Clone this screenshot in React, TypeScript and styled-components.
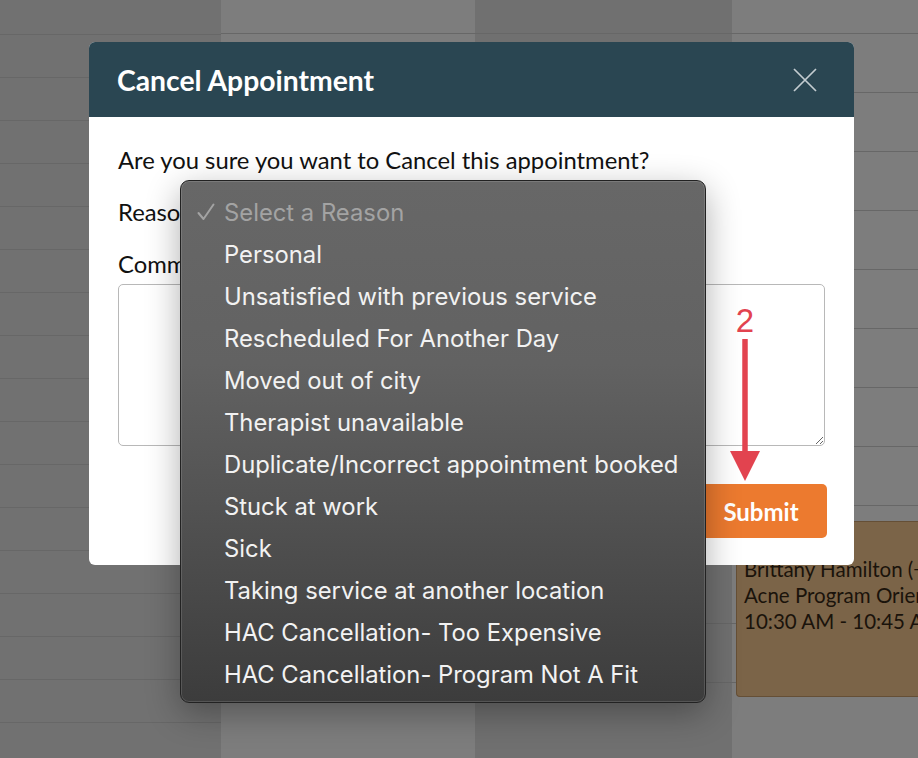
import styled, { createGlobalStyle } from 'styled-components'

// ─── global ───
const GlobalStyle = createGlobalStyle`
  html, body { margin: 0; padding: 0; height: 100%; overflow: hidden; }
  body { font-family: Lato, "Liberation Sans", sans-serif; }
  #root { height: 100%; }
`

const Page = styled.div`
  position: relative;
  width: 100%;
  height: 100vh;
  overflow: hidden;
`

// ─── calendar behind the overlay ───
const Calendar = styled.div`
  display: grid;
  grid-template-columns: 221px 254px 257px 1fr;
  height: 100%;
`

const DayColumn = styled.div<{ $shade: string; $step: number; $offset: number }>`
  display: flex;
  flex-direction: column;
  min-width: 0;
  background-color: ${p => p.$shade};
  background-image: repeating-linear-gradient(
    to bottom,
    transparent 0,
    transparent ${p => p.$step - 1}px,
    #676767 ${p => p.$step - 1}px,
    #676767 ${p => p.$step}px
  );
  background-position: 0 ${p => p.$offset}px;
`

const EventSlot = styled.div`
  padding: 521px 0 0 4px;
`

const EventCard = styled.div`
  height: 176px;
  box-sizing: border-box;
  padding: 34px 0 0 7px;
  background: #7b6448;
  border: 1px solid #654f36;
  border-right: none;
  border-radius: 4px 0 0 4px;
  font-size: 20.5px;
  line-height: 26px;
  color: #1a130b;
  white-space: nowrap;
  overflow: hidden;
`

// ─── modal ───
const Modal = styled.div`
  position: absolute;
  left: 89px;
  top: 42px;
  width: 765px;
  background: #fff;
  border-radius: 6px;
  overflow: hidden;
`

const ModalHeader = styled.div`
  height: 75px;
  box-sizing: border-box;
  display: flex;
  align-items: center;
  justify-content: space-between;
  padding: 0 37px 0 28px;
  background: #2a4652;
`

const Title = styled.h2`
  margin: 0;
  font-size: 28.3px;
  font-weight: 700;
  color: #fff;
`

const CloseBtn = styled.button`
  display: flex;
  padding: 0;
  border: none;
  background: none;
  cursor: pointer;
`

const ModalBody = styled.div`
  padding: 31px 29px 27px;
  color: #111;
  font-size: 23.8px;
  line-height: 24px;
`

const Question = styled.p`
  margin: 0;
`

const FieldLabel = styled.div<{ $gap: number }>`
  margin-top: ${p => p.$gap}px;
`

const CommentBox = styled.textarea`
  display: block;
  width: 100%;
  height: 162px;
  box-sizing: border-box;
  margin-top: 8px;
  border: 1.5px solid #b8b8b8;
  border-radius: 5px;
  font: inherit;
`

const Footer = styled.div`
  display: flex;
  justify-content: flex-end;
  margin: 38px -2px 0 0;
`

const SubmitBtn = styled.button`
  width: 132px;
  height: 54px;
  border: none;
  border-radius: 5px;
  background: #ec7a2f;
  color: #fff;
  font-family: Lato, "Liberation Sans", sans-serif;
  font-size: 24px;
  font-weight: 700;
  cursor: pointer;
`

// ─── native select popup ───
const ReasonMenu = styled.ul`
  position: absolute;
  left: 180px;
  top: 180px;
  width: 526px;
  box-sizing: border-box;
  margin: 0;
  padding: 10px 0 7px;
  list-style: none;
  background: linear-gradient(to bottom, #676767 0%, #626262 35%, #4b4b4b 75%, #3c3c3c 100%);
  border: 1px solid #222;
  border-radius: 9px;
  box-shadow: inset 0 0 0 1px rgba(255, 255, 255, 0.13), 0 10px 34px rgba(0, 0, 0, 0.32);
  font-family: Inter, "Noto Sans", sans-serif;
`

const ReasonItem = styled.li<{ $placeholder?: boolean }>`
  display: flex;
  align-items: center;
  height: 42px;
  font-size: 23.8px;
  color: ${p => (p.$placeholder ? '#a3a3a3' : '#f2f2f2')};
  white-space: nowrap;
`

const CheckSlot = styled.span`
  display: flex;
  justify-content: flex-end;
  width: 43px;
  box-sizing: border-box;
  padding-right: 9px;
`

// ─── annotation ───
const Annotation = styled.div`
  position: absolute;
  left: 725px;
  top: 304px;
  width: 40px;
  display: flex;
  flex-direction: column;
  align-items: center;
  gap: 2px;
  color: #e2434f;
`

const StepNumber = styled.span`
  font-family: "Liberation Sans", Arial, sans-serif;
  font-size: 33px;
  line-height: 33px;
`

const reasons = [
  'Personal',
  'Unsatisfied with previous service',
  'Rescheduled For Another Day',
  'Moved out of city',
  'Therapist unavailable',
  'Duplicate/Incorrect appointment booked',
  'Stuck at work',
  'Sick',
  'Taking service at another location',
  'HAC Cancellation- Too Expensive',
  'HAC Cancellation- Program Not A Fit',
]

export default function App() {
  return (
    <Page>
      <GlobalStyle />
      <Calendar>
        <DayColumn $shade="#717171" $step={43} $offset={-8} />
        <DayColumn $shade="#7d7d7d" $step={59} $offset={-25} />
        <DayColumn $shade="#707070" $step={59} $offset={-25} />
        <DayColumn $shade="#7d7d7d" $step={59} $offset={-25}>
          <EventSlot>
            <EventCard>
              Brittany Hamilton (+1 555)
              <br />
              Acne Program Orientation
              <br />
              10:30 AM - 10:45 AM
            </EventCard>
          </EventSlot>
        </DayColumn>
      </Calendar>

      <Modal>
        <ModalHeader>
          <Title>Cancel Appointment</Title>
          <CloseBtn aria-label="Close">
            <svg width="24" height="24" viewBox="0 0 24 24">
              <path d="M1 1 L23 23 M23 1 L1 23" stroke="#c3ccd1" strokeWidth="1.7" fill="none" />
            </svg>
          </CloseBtn>
        </ModalHeader>
        <ModalBody>
          <Question>Are you sure you want to Cancel this appointment?</Question>
          <FieldLabel $gap={28}>Reason</FieldLabel>
          <FieldLabel $gap={28}>Comments</FieldLabel>
          <CommentBox />
          <Footer>
            <SubmitBtn>Submit</SubmitBtn>
          </Footer>
        </ModalBody>
      </Modal>

      <ReasonMenu>
        <ReasonItem $placeholder>
          <CheckSlot>
            <svg width="18" height="18" viewBox="0 0 18 18">
              <path d="M1.5 10 L6.5 16 L16.5 1.5" stroke="#a3a3a3" strokeWidth="2" fill="none" strokeLinecap="round" strokeLinejoin="round" />
            </svg>
          </CheckSlot>
          Select a Reason
        </ReasonItem>
        {reasons.map(r => (
          <ReasonItem key={r}>
            <CheckSlot />
            {r}
          </ReasonItem>
        ))}
      </ReasonMenu>

      <Annotation>
        <StepNumber>2</StepNumber>
        <svg width="32" height="142" viewBox="0 0 32 142">
          <line x1="16" y1="0" x2="16" y2="116" stroke="#e2434f" strokeWidth="5.5" />
          <polygon points="1,112 31,112 16,142" fill="#e2434f" />
        </svg>
      </Annotation>
    </Page>
  )
}
